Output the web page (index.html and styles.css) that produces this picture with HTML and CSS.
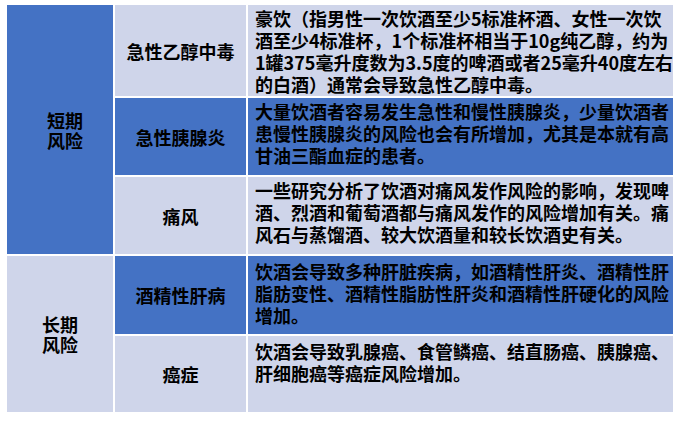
FILE: index.html
```html
<!DOCTYPE html>
<html lang="zh-CN">
<head>
<meta charset="utf-8">
<link rel="stylesheet" href="styles.css">
</head>
<body>
<div class="table">
  <div class="cell cat dark cat-short">短期<br>风险</div>
  <div class="cell name light r1">急性乙醇中毒</div>
  <div class="cell desc light r1">豪饮（指男性一次饮酒至少5标准杯酒、女性一次饮<br>酒至少4标准杯，1个标准杯相当于10g纯乙醇，约为<br>1罐375毫升度数为3.5度的啤酒或者25毫升40度左右<br>的白酒）通常会导致急性乙醇中毒。</div>

  <div class="cell name dark r2">急性胰腺炎</div>
  <div class="cell desc dark r2">大量饮酒者容易发生急性和慢性胰腺炎，少量饮酒者<br>患慢性胰腺炎的风险也会有所增加，尤其是本就有高<br>甘油三酯血症的患者。</div>

  <div class="cell name light r3">痛风</div>
  <div class="cell desc light r3">一些研究分析了饮酒对痛风发作风险的影响，发现啤<br>酒、烈酒和葡萄酒都与痛风发作的风险增加有关。痛<br>风石与蒸馏酒、较大饮酒量和较长饮酒史有关。</div>

  <div class="cell cat light cat-long">长期<br>风险</div>
  <div class="cell name dark r4">酒精性肝病</div>
  <div class="cell desc dark r4 lower">饮酒会导致多种肝脏疾病，如酒精性肝炎、酒精性肝<br>脂肪变性、酒精性脂肪性肝炎和酒精性肝硬化的风险<br>增加。</div>

  <div class="cell name light r5">癌症</div>
  <div class="cell desc light r5 lower">饮酒会导致乳腺癌、食管鳞癌、结直肠癌、胰腺癌、<br>肝细胞癌等癌症风险增加。</div>
</div>
</body>
</html>
```

FILE: styles.css
```css
html, body {
  margin: 0;
  padding: 0;
  background: #ffffff;
}

body {
  font-family: "Noto Sans CJK SC", "Noto Sans", sans-serif;
  font-weight: 700;
  font-size: 18px;
  color: #000000;
}

.table {
  display: grid;
  grid-template-columns: 106px 131px 425px;
  grid-template-rows: 91px 77px 77px 78px 76px;
  gap: 2px;
  padding: 5px 0 0 7px;
  width: 666px;
}

.cell {
  box-sizing: border-box;
  line-height: 22px;
}

.dark { background: #4472c4; }
.light { background: #cfd5ea; }

.cat {
  grid-column: 1;
  display: flex;
  align-items: center;
  justify-content: center;
  text-align: center;
  line-height: 20px;
}

.cat-short { grid-row: 1 / 4; padding-left: 10px; }
.cat-long { grid-row: 4 / 6; }

.name {
  grid-column: 2;
  display: flex;
  align-items: center;
  justify-content: center;
  text-align: center;
  white-space: nowrap;
}

.desc {
  grid-column: 3;
  padding: 2px 0 0 7px;
  white-space: nowrap;
}

.desc.lower { padding-top: 4px; }

.r1 { grid-row: 1; }
.r2 { grid-row: 2; }
.r3 { grid-row: 3; }
.r4 { grid-row: 4; }
.r5 { grid-row: 5; }
```
